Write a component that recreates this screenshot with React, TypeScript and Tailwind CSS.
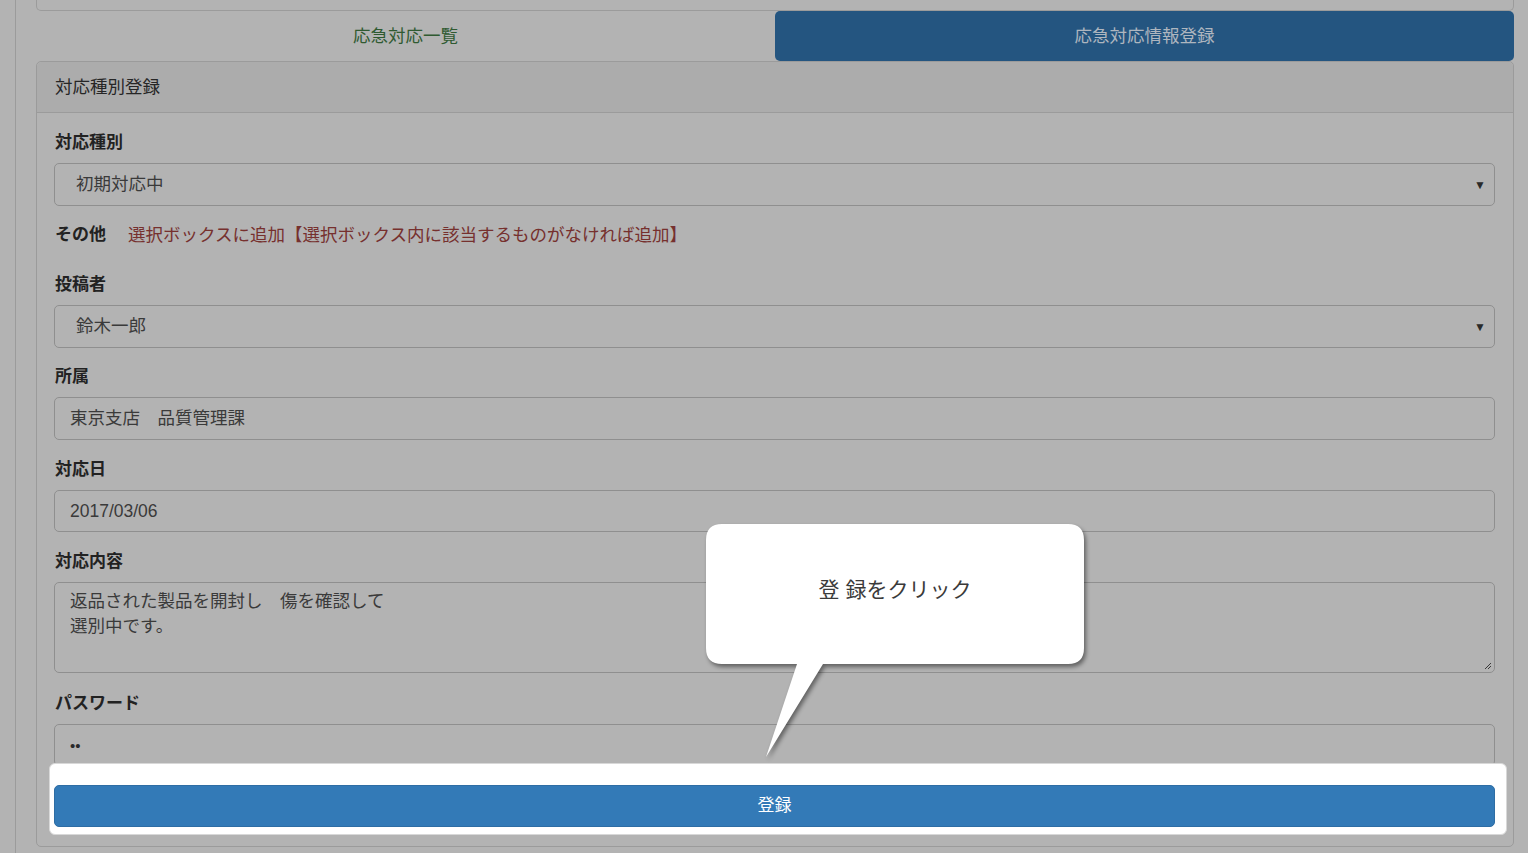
import React from "react";

const font = { fontFamily: '"Liberation Sans", "Noto Sans CJK JP", sans-serif' };

function Label({ children }: { children: React.ReactNode }) {
  return (
    <div className="font-bold text-[17px] leading-[24px] text-[#222] mb-[8px] pl-[1px]">{children}</div>
  );
}

function SelectBox({ value }: { value: string }) {
  return (
    <div className="h-[43px] border border-[#8f8f8f] rounded-[5px] flex items-center justify-between pl-[21px] pr-[8px] text-[#3a3a3a]">
      <span>{value}</span>
      <span className="text-[12px] text-[#2a2a2a]">▼</span>
    </div>
  );
}

function InputBox({ value, h = "h-[43px]" }: { value: React.ReactNode; h?: string }) {
  return (
    <div className={`${h} border border-[#8f8f8f] rounded-[5px] flex items-center pl-[15px] text-[#3a3a3a]`}>
      {value}
    </div>
  );
}

export default function App() {
  return (
    <div
      className="relative w-[1528px] h-[853px] overflow-hidden bg-[#b3b3b3] text-[17.5px]"
      style={font}
    >
      <div className="h-full ml-[15px] border-l border-[#9b9b9b] pl-[20px] pr-[14px]">
        {/* previous panel bottom */}
        <div className="h-[11px] border border-t-0 border-[#9b9b9b] rounded-b-[5px]" />
        {/* tabs */}
        <div className="flex h-[50px]">
          <div className="flex-1 flex items-center justify-center text-[#2f5a31]">応急対応一覧</div>
          <div className="flex-1 flex items-center justify-center bg-[#245580] rounded-[5px] text-[#aeb6bf]">
            応急対応情報登録
          </div>
        </div>
        {/* panel */}
        <div className="border border-[#9b9b9b] rounded-[5px] h-[786px]">
          <div className="h-[51px] bg-[#acacac] border-b border-[#9b9b9b] rounded-t-[5px] flex items-center pl-[18px] text-[#262626]">
            対応種別登録
          </div>
          <div className="pt-[18px] pl-[17px] pr-[18px]">
            <Label>対応種別</Label>
            <SelectBox value="初期対応中" />
            <div className="mt-[17px] mb-[26px] h-[24px] flex items-center pl-[1px]">
              <span className="font-bold text-[17px] text-[#222]">その他</span>
              <span className="ml-[22px] text-[#76302e]">
                選択ボックスに追加【選択ボックス内に該当するものがなければ追加】
              </span>
            </div>
            <Label>投稿者</Label>
            <SelectBox value="鈴木一郎" />
            <div className="h-[17px]" />
            <Label>所属</Label>
            <InputBox value="東京支店　品質管理課" />
            <div className="h-[18px]" />
            <Label>対応日</Label>
            <InputBox value="2017/03/06" h="h-[42px]" />
            <div className="h-[18px]" />
            <Label>対応内容</Label>
            <div className="relative h-[91px] border border-[#8f8f8f] rounded-[5px] pl-[15px] pt-[6px] text-[#3a3a3a] leading-[25px]">
              <div>返品された製品を開封し　傷を確認して</div>
              <div>選別中です。</div>
              <svg className="absolute right-[2px] bottom-[2px]" width="9" height="9" viewBox="0 0 9 9">
                <path d="M8 2 L2 8 M8 5 L5 8" stroke="#3a3a3a" strokeWidth="1" />
              </svg>
            </div>
            <div className="h-[19px]" />
            <Label>パスワード</Label>
            <InputBox
              value={<span className="text-[15px] text-[#2a2a2a] leading-none">••</span>}
              h="h-[42px]"
            />
            <div className="relative mt-[19px] h-[42px]">
              <div className="absolute left-[-5px] right-[-12px] top-[-22px] bottom-[-8px] bg-white rounded-[6px] border border-[#d8d8d8]" />
              <div className="relative h-[42px] bg-[#337ab7] border border-[#2e6da4] rounded-[5px] flex items-center justify-center text-white text-[17px]">
                登録
              </div>
            </div>
          </div>
        </div>
      </div>

      {/* callout */}
      <div className="absolute left-[706px] top-[524px] w-[392px] h-[240px]">
        <svg
          width="392"
          height="240"
          viewBox="0 0 392 240"
          className="absolute left-0 top-0"
          style={{ filter: "drop-shadow(2px 3px 2px rgba(0,0,0,0.45))" }}
        >
          <path
            d="M16 0 H362 Q378 0 378 16 V124 Q378 140 362 140 H117 L60 233 L91 140 H16 Q0 140 0 124 V16 Q0 0 16 0 Z"
            fill="#ffffff"
          />
        </svg>
        <div className="absolute left-0 top-[50px] w-[378px] text-center leading-[32px]">
          <span className="text-[21px] text-[#3a3a3a]">登 録をクリック</span>
        </div>
      </div>
    </div>
  );
}
